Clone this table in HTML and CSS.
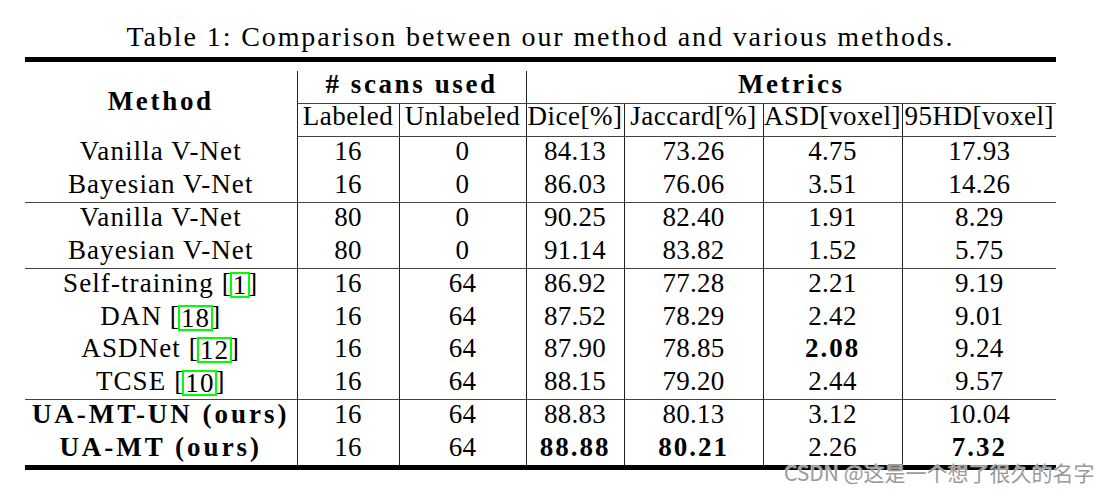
FILE: index.html
```html
<!DOCTYPE html>
<html lang="en">
<head>
<meta charset="utf-8">
<title>Table 1</title>
<link rel="stylesheet" href="styles.css">
</head>
<body>
<div class="page">
  <p class="caption">Table 1: Comparison between our method and various methods.</p>
  <div class="table-wrap">
    <table class="results">
      <colgroup>
        <col class="c-method">
        <col class="c-lab">
        <col class="c-unlab">
        <col class="c-dice">
        <col class="c-jac">
        <col class="c-asd">
        <col class="c-hd">
      </colgroup>
      <thead>
        <tr class="head-1">
          <th rowspan="2" class="method-head">Method</th>
          <th colspan="2" class="group-head">#&nbsp;scans used</th>
          <th colspan="4" class="group-head">Metrics</th>
        </tr>
        <tr class="head-2">
          <th>Labeled</th>
          <th>Unlabeled</th>
          <th>Dice[%]</th>
          <th>Jaccard[%]</th>
          <th>ASD[voxel]</th>
          <th>95HD[voxel]</th>
        </tr>
      </thead>
      <tbody>
        <tr><td class="name">Vanilla V-Net</td><td>16</td><td>0</td><td>84.13</td><td>73.26</td><td>4.75</td><td>17.93</td></tr>
        <tr><td class="name">Bayesian V-Net</td><td>16</td><td>0</td><td>86.03</td><td>76.06</td><td>3.51</td><td>14.26</td></tr>
      </tbody>
      <tbody>
        <tr><td class="name">Vanilla V-Net</td><td>80</td><td>0</td><td>90.25</td><td>82.40</td><td>1.91</td><td>8.29</td></tr>
        <tr><td class="name">Bayesian V-Net</td><td>80</td><td>0</td><td>91.14</td><td>83.82</td><td>1.52</td><td>5.75</td></tr>
      </tbody>
      <tbody>
        <tr><td class="name">Self-training [<span class="cite">1</span>]</td><td>16</td><td>64</td><td>86.92</td><td>77.28</td><td>2.21</td><td>9.19</td></tr>
        <tr><td class="name">DAN [<span class="cite">18</span>]</td><td>16</td><td>64</td><td>87.52</td><td>78.29</td><td>2.42</td><td>9.01</td></tr>
        <tr><td class="name">ASDNet [<span class="cite">12</span>]</td><td>16</td><td>64</td><td>87.90</td><td>78.85</td><td class="best">2.08</td><td>9.24</td></tr>
        <tr><td class="name">TCSE [<span class="cite">10</span>]</td><td>16</td><td>64</td><td>88.15</td><td>79.20</td><td>2.44</td><td>9.57</td></tr>
      </tbody>
      <tbody>
        <tr><td class="name ours">UA-MT-UN (ours)</td><td>16</td><td>64</td><td>88.83</td><td>80.13</td><td>3.12</td><td>10.04</td></tr>
        <tr><td class="name ours">UA-MT (ours)</td><td>16</td><td>64</td><td class="best">88.88</td><td class="best">80.21</td><td>2.26</td><td class="best">7.32</td></tr>
      </tbody>
    </table>
  </div>
  <div class="watermark">CSDN @这是一个想了很久的名字</div>
</div>
</body>
</html>
```

FILE: styles.css
```css
* {
  box-sizing: border-box;
}

html,
body {
  margin: 0;
  background: #ffffff;
}

body {
  font-family: "Liberation Serif", "Times New Roman", serif;
  color: #000000;
}

.page {
  position: relative;
  width: 1113px;
  height: 489px;
  padding: 21px 0 0 25px;
  overflow: hidden;
}

.caption {
  width: 1031px;
  margin: 0 0 4px;
  font-size: 28px;
  line-height: 32px;
  text-align: center;
  letter-spacing: 1.9px;
  white-space: nowrap;
}

.table-wrap {
  width: 1031px;
  border-top: 5px solid #000000;
  border-bottom: 5px solid #000000;
  padding-top: 9px;
}

.results {
  width: 100%;
  table-layout: fixed;
  border-collapse: collapse;
  font-size: 27px;
}

.c-method { width: 272px; }
.c-lab { width: 102px; }
.c-unlab { width: 127px; }
.c-dice { width: 98px; }
.c-jac { width: 139px; }
.c-asd { width: 139px; }
.c-hd { width: 154px; }

.results th,
.results td {
  padding: 0;
  text-align: center;
  white-space: nowrap;
}

.results th {
  font-weight: normal;
}

/* vertical rules between columns */
.head-1 th + th,
.head-2 th,
.results td + td {
  border-left: 1px solid #222222;
}

.head-1 th {
  font-weight: bold;
  letter-spacing: 2.6px;
  line-height: 26px;
  padding-bottom: 6px;
}

.head-1 .group-head {
  border-bottom: 1px solid #444444;
}

.head-1 .method-head {
  vertical-align: middle;
  padding-bottom: 5px;
  letter-spacing: 2.7px;
}

.head-2 th {
  line-height: 24px;
  padding-bottom: 8px;
  letter-spacing: 0.5px;
  border-bottom: 1px solid #444444;
}

.results td {
  line-height: 29.5px;
  padding-bottom: 3px;
  letter-spacing: 0.3px;
}

.results td.name {
  letter-spacing: 1.1px;
}

.results td.ours {
  font-weight: bold;
  letter-spacing: 3px;
}

.results td.best {
  font-weight: bold;
  letter-spacing: 2px;
}

.results tbody + tbody {
  border-top: 1px solid #444444;
}

.cite {
  display: inline-block;
  line-height: 22px;
  padding: 0 1px;
  margin: 0 -2px;
  border: 2px solid #00ff00;
  position: relative;
  top: 2px;
}

.watermark {
  position: absolute;
  left: 784px;
  top: 462px;
  font-family: "Noto Sans CJK SC", "Noto Sans", sans-serif;
  font-size: 21px;
  line-height: 21px;
  color: #9a9a9a;
  white-space: nowrap;
  text-shadow: 0 0 1px #ffffff, 0 0 2px #ffffff;
}
```
